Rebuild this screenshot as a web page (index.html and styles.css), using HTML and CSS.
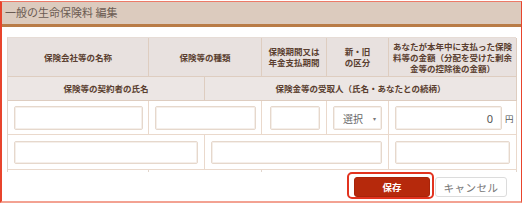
FILE: index.html
```html
<!DOCTYPE html>
<html lang="ja">
<head>
  <meta charset="UTF-8">
  <title>一般の生命保険料 編集</title>
  <link rel="stylesheet" href="styles.css">
</head>
<body>
  <div class="panel">
    <div class="panel-head">一般の生命保険料 編集</div>

    <div class="panel-body">
      <div class="grid">
        <!-- header row 1 -->
        <div class="th c1">保険会社等の名称</div>
        <div class="th c23">保険等の種類</div>
        <div class="th c4">保険期間又は<br>年金支払期間</div>
        <div class="th c5">新・旧<br>の区分</div>
        <div class="th c6">あなたが本年中に支払った保険<br>料等の金額（分配を受けた剰余<br>金等の控除後の金額）</div>

        <!-- header row 2 -->
        <div class="th th-low c12">保険等の契約者の氏名</div>
        <div class="th th-low c36">保険金等の受取人（氏名・あなたとの続柄）</div>

        <!-- data row 1 -->
        <div class="td c1"><input class="inp" type="text"></div>
        <div class="td c23"><input class="inp" type="text"></div>
        <div class="td c4 narrow"><input class="inp" type="text"></div>
        <div class="td c5">
          <div class="select"><span>選択</span><span class="caret">▾</span></div>
        </div>
        <div class="td c6 money">
          <input class="inp num" type="text" value="0">
          <span class="yen">円</span>
        </div>

        <!-- data row 2 -->
        <div class="td td-2 c12"><input class="inp" type="text"></div>
        <div class="td td-2 c35"><input class="inp" type="text"></div>
        <div class="td td-2 c6"><input class="inp" type="text"></div>

        <!-- empty tail row -->
        <div class="tail c1"></div>
        <div class="tail c23"></div>
        <div class="tail c46"></div>
      </div>

      <div class="actions">
        <span class="ring"><button class="btn btn-save">保存</button></span>
        <button class="btn btn-cancel">キャンセル</button>
      </div>
    </div>
  </div>
</body>
</html>
```

FILE: styles.css
```css
* {
  box-sizing: border-box;
}

html, body {
  margin: 0;
  padding: 0;
  background: #fff;
  font-family: "Noto Sans CJK JP", "Noto Sans", sans-serif;
}

body {
  width: 523px;
  height: 203px;
  padding-top: 1px;
}

.panel {
  width: 522px;
  height: 202px;
  border-top: 1px solid #ec7a68;
  border-left: 2px solid #e8442c;
  border-right: 1px solid #e8442c;
  border-bottom: 2px solid #f3a292;
}

.panel-head {
  height: 25px;
  background: #dccbbe;
  border-bottom: 3px solid #b97c47;
  color: #6b5b52;
  font-size: 11px;
  line-height: 21px;
  padding-left: 3px;
}

.panel-body {
  padding: 10px 0 0 5px;
}

.grid {
  display: grid;
  grid-template-columns: 141px 56px 57px 65px 62px 128px;
  grid-template-rows: 39px 24px 34px 35px 2px;
  width: 509px;
  border-top: 1px solid #e6dcd6;
  border-left: 1px solid #e2d4c9;
}

.c1 { grid-column: 1 / 2; }
.c12 { grid-column: 1 / 3; }
.c23 { grid-column: 2 / 4; }
.c36 { grid-column: 3 / 7; }
.c35 { grid-column: 3 / 6; }
.c4 { grid-column: 4 / 5; }
.c46 { grid-column: 4 / 7; }
.c5 { grid-column: 5 / 6; }
.c6 { grid-column: 6 / 7; }

.th {
  background: #e8e1df;
  border-right: 1px solid #decdc0;
  border-bottom: 1px solid #decdc0;
  color: #5a3e2f;
  font-size: 8.5px;
  font-weight: bold;
  line-height: 11px;
  display: flex;
  align-items: center;
  justify-content: center;
  text-align: center;
  white-space: nowrap;
}

.th-low {
  background: #ece6e4;
}

.td {
  border-right: 1px solid #ead9cc;
  border-bottom: 1px solid #ead9cc;
  padding: 5px 5px 4px 6px;
}

.td-2 {
  padding: 6px 6px 5px 6px;
}

.narrow {
  padding-left: 8px;
  padding-right: 6px;
}

.inp {
  display: block;
  width: 100%;
  height: 100%;
  margin: 0;
  border: 1px solid #e6d8cc;
  border-radius: 2px;
  box-shadow: inset 0 0 0 1px #f5efea;
  background: #fff;
  font-family: "Noto Sans", sans-serif;
  font-size: 11px;
  color: #555;
  padding: 0 8px;
  outline: none;
}

.select {
  height: 100%;
  width: 49px;
  border: 1px solid #e6d8cc;
  border-radius: 2px;
  box-shadow: inset 0 0 0 1px #f5efea;
  display: flex;
  align-items: center;
  justify-content: space-between;
  padding: 0 5px 0 9px;
  color: #666;
  font-size: 10px;
}

.caret {
  font-size: 6px;
  color: #777;
}

.money {
  display: flex;
  align-items: center;
  gap: 3px;
  padding-right: 5px;
}

.money .inp {
  width: 107px;
  flex: none;
}

.num {
  text-align: right;
}

.yen {
  color: #555;
  font-size: 8.5px;
}

.tail {
  border-right: 1px solid #e2d6cd;
}

.actions {
  display: flex;
  justify-content: flex-end;
  align-items: flex-start;
  padding-right: 14px;
}

.ring {
  display: flex;
  border: 2px solid #e2331f;
  border-radius: 5px;
  padding: 3px 2px 0 5px;
  height: 27px;
}

.btn {
  height: 20px;
  margin: 0;
  border-radius: 3px;
  font-family: "Noto Sans CJK JP", sans-serif;
  cursor: pointer;
}

.btn-save {
  width: 76px;
  background: #b6290c;
  border: 1px solid #a8240a;
  color: #fff;
  font-size: 9.5px;
  font-weight: bold;
}

.btn-cancel {
  width: 72px;
  margin-top: 5px;
  margin-left: 1px;
  background: #fff;
  border: 1px solid #dcdcdc;
  color: #777;
  font-size: 10.5px;
  letter-spacing: 0.5px;
}
```
